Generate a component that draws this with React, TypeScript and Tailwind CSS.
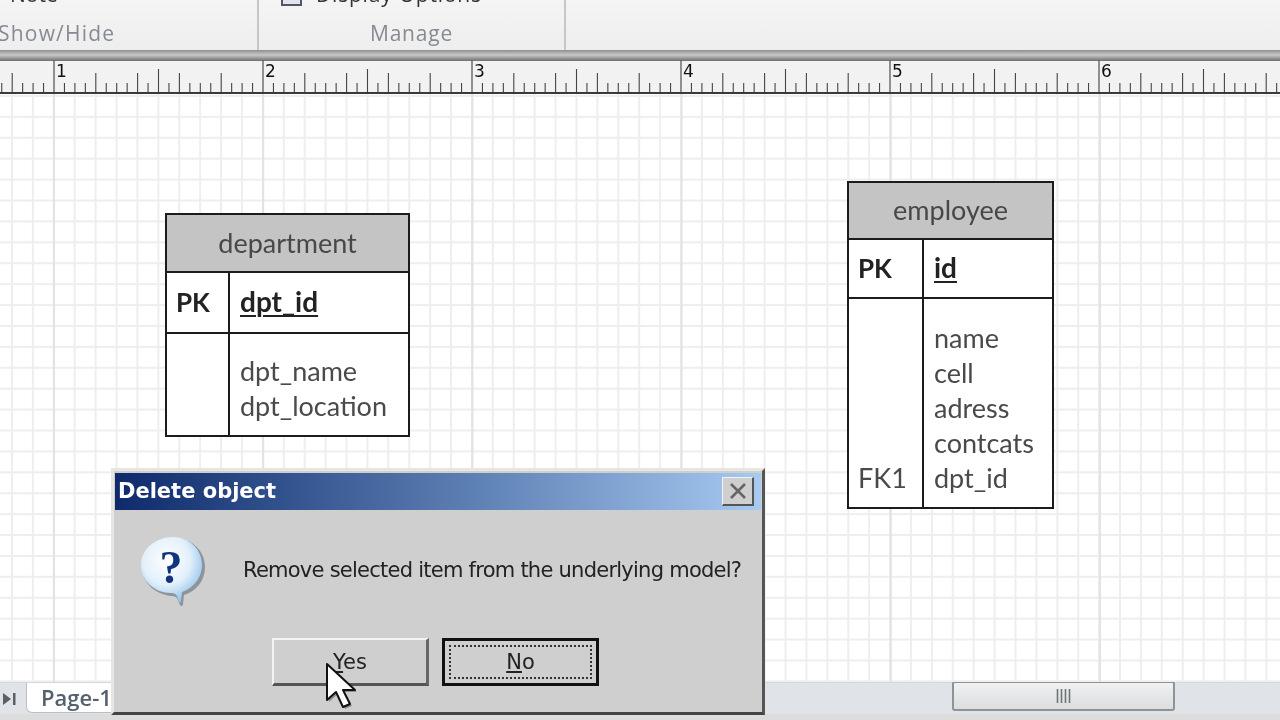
const MAJORS = [54, 263, 472, 681, 890, 1099];
const STEP = 10.45;

function tickTop(i: number) {
  const pos = ((i % 20) + 20) % 20;
  if (pos === 0) return 60;
  if (pos === 10) return 69;
  if (pos === 4 || pos === 8 || pos === 12 || pos === 16) return 73;
  return 83;
}

function Ruler() {
  const ticks = [];
  for (let i = -5; i < 118; i++) {
    const x = 54 + i * STEP;
    const top = tickTop(i);
    ticks.push(
      <line key={i} x1={x} x2={x} y1={top - 60} y2={32} stroke={top === 60 ? "#666" : "#444"} strokeWidth={top === 60 ? 1.4 : 1.1} />
    );
  }
  return (
    <div className="relative h-[34px] shrink-0 border-b-[2px] border-t border-[#3a3a3a] border-t-[#777] bg-[#f2f2f2]">
      <svg className="absolute left-0 top-[-1px]" width="1280" height="32">
        {ticks}
      </svg>
      {MAJORS.map((x, i) => (
        <span key={x} className="absolute top-[0px] text-[17px] leading-[20px] text-[#111] font-['DejaVu_Sans',sans-serif]" style={{ left: x + 2 }}>
          {i + 1}
        </span>
      ))}
    </div>
  );
}

function Ribbon() {
  return (
    <div className="flex h-[50px] shrink-0 bg-gradient-to-b from-[#f4f4f4] to-[#eeeeee] font-['Open_Sans',sans-serif] text-[21px] text-[#868b92]">
      <div className="relative w-[259px] shrink-0 border-r-2 border-[#c6c6c6]">
        <span className="absolute left-[-2px] bottom-[2px] leading-[30px] tracking-[1.2px]">Show/Hide</span>
        <span className="absolute left-[10px] top-[-21px] leading-[30px] text-[#333]">Note</span>
      </div>
      <div className="relative flex w-[307px] shrink-0 justify-center border-r-2 border-[#c6c6c6]">
        <span className="absolute left-[22px] top-[-12px] h-[18px] w-[21px] border-2 border-[#556] bg-[#dfe5ee]" />
        <span className="absolute left-[57px] top-[-21px] whitespace-nowrap leading-[30px] tracking-[0.8px] text-[#333]">Display Options</span>
        <span className="absolute bottom-[2px] leading-[30px] tracking-[0.8px]">Manage</span>
      </div>
      <div className="flex-1" />
    </div>
  );
}

function Band() {
  return <div className="h-[10px] shrink-0 bg-gradient-to-b from-[#8f8f8f] via-[#c9c9c9] to-[#7d7d7d]" />;
}

type TableProps = {
  name: string;
  keyField: string;
  rows: { key?: string; label: string }[];
  colWidth: string;
  pos: string;
  headerH: string;
  keyH: string;
};

function EntityTable({ name, keyField, rows, colWidth, pos, headerH, keyH }: TableProps) {
  return (
    <div className={`absolute flex flex-col border-2 border-[#1c1c1c] bg-white font-['Lato',sans-serif] text-[27px] text-[#4a4a4a] ${pos}`}>
      <div className={`flex shrink-0 items-center justify-center border-b-2 border-[#1c1c1c] bg-[#c4c4c4] text-[#484848] ${headerH}`}>{name}</div>
      <div className={`flex shrink-0 border-b-2 border-[#1c1c1c] text-[28px] font-bold text-[#222] ${keyH}`}>
        <div className={`flex shrink-0 items-center border-r-2 border-[#1c1c1c] pb-[1px] pl-[9px] text-[26px] ${colWidth}`}>PK</div>
        <div className="flex items-center pb-[3px] pl-[10px]">
          <span className="underline decoration-2 underline-offset-[3px]">{keyField}</span>
        </div>
      </div>
      <div className="flex flex-1">
        <div className={`flex shrink-0 flex-col justify-end border-r-2 border-[#1c1c1c] pb-[12px] pl-[9px] ${colWidth}`}>
          {rows.map((r) => (
            <div key={r.label} className="h-[35px] leading-[35px]">{r.key ?? ""}</div>
          ))}
        </div>
        <div className="flex flex-col justify-end pb-[12px] pl-[10px]">
          {rows.map((r) => (
            <div key={r.label} className="h-[35px] leading-[35px]">{r.label}</div>
          ))}
        </div>
      </div>
    </div>
  );
}

function QuestionIcon() {
  return (
    <svg width="74" height="76" viewBox="0 0 74 76">
      <defs>
        <radialGradient id="bubble" cx="0.42" cy="0.35" r="0.7">
          <stop offset="0" stopColor="#ffffff" />
          <stop offset="0.55" stopColor="#e2f0fb" />
          <stop offset="1" stopColor="#86bde8" />
        </radialGradient>
      </defs>
      <path d="M37 4C19 4 5 16 5 33c0 16 14 28 30 29 3 0 4 1 5 2l3 7c1 2 3 1 3-1l1-9c13-4 21-15 21-28C68 16 54 4 37 4z" fill="#8e949a" />
      <path d="M36 3C19 3 4 15 4 31c0 16 14 28 30 28 3 0 5 1 6 3l2 6c1 1 2 1 2-1l1-9c12-4 20-15 20-27C65 15 52 3 36 3z" fill="url(#bubble)" />
      <text x="34" y="49" textAnchor="middle" fontFamily="Liberation Serif, serif" fontWeight="700" fontSize="46" fill="#12347f">?</text>
    </svg>
  );
}

function Cursor() {
  return (
    <svg className="absolute left-[323px] top-[660px]" width="34" height="52" viewBox="0 0 34 52">
      <path d="M6 6v36l9-8 7 15 7-3-7-14h12z" fill="#000" opacity="0.3" />
      <path d="M4 4v36l9-8 7 15 7-3-7-14h12z" fill="#fff" stroke="#111" strokeWidth="2" strokeLinejoin="round" />
    </svg>
  );
}

function Dialog() {
  return (
    <div className="absolute left-[111px] top-[468px] flex h-[247px] w-[654px] flex-col border-[3px] border-t-[#e8e6e0] border-l-[#e8e6e0] border-r-[#555] border-b-[#444] bg-[#cfcfcf] px-[1px] pt-[2px] font-['DejaVu_Sans',sans-serif]">
      <div className="flex h-[37px] shrink-0 items-center justify-between bg-gradient-to-r from-[#0f2a6b] to-[#a6caf0] pl-[3px] pr-[7px]">
        <span className="text-[21px] font-bold tracking-[0px] text-white">Delete object</span>
        <div className="flex h-[29px] w-[32px] items-center justify-center border border-b-2 border-r-2 border-t-[#f2f2f2] border-l-[#f2f2f2] border-r-[#555] border-b-[#555] bg-[#cfcfcf]">
          <svg width="20" height="18" viewBox="0 0 20 18">
            <path d="M3 2l14 14M17 2L3 16" stroke="#666" strokeWidth="2.6" />
          </svg>
        </div>
      </div>
      <div className="flex flex-1 flex-col">
        <div className="flex items-start pl-[22px] pt-[24px]">
          <QuestionIcon />
          <span className="ml-[32px] mt-[22px] whitespace-nowrap text-[21px] leading-[28px] tracking-[-0.75px] text-[#222]">
            Remove selected item from the underlying model?
          </span>
        </div>
        <div className="mt-[28px] flex pl-[157px] text-[21px] text-[#222]">
          <div className="flex h-[48px] w-[157px] items-center justify-center border-2 border-b-[3px] border-r-[3px] border-t-[#f4f4f4] border-l-[#f4f4f4] border-r-[#666] border-b-[#555]">
            <span className="translate-y-[1px]"><span className="underline">Y</span>es</span>
          </div>
          <div className="ml-[13px] flex h-[48px] w-[157px] items-center justify-center border-[3px] border-[#111] p-[4px]">
            <div className="flex h-full w-full items-center justify-center border-2 border-dotted border-[#333]">
              <span className="translate-y-[1px]"><span className="underline">N</span>o</span>
            </div>
          </div>
        </div>
      </div>
    </div>
  );
}

function BottomBar() {
  return (
    <div className="flex h-[38px] shrink-0 flex-col border-t border-[#d5d9de] bg-[#e0e3e8]">
      <div className="flex h-[31px] items-start">
        <svg className="ml-[2px] mt-[8px]" width="16" height="16" viewBox="0 0 16 16">
          <path d="M1 2l8 6-8 6z" fill="#5b6066" />
          <rect x="11" y="2" width="2.5" height="12" fill="#5b6066" />
        </svg>
        <div className="ml-[8px] flex h-[30px] w-[150px] items-center rounded-b-[6px] border-x border-b border-[#b9bec4] bg-white pl-[14px] font-['Open_Sans',sans-serif] text-[22px] font-semibold text-[#55606c]">
          Page-1
        </div>
        <div className="-mt-[2px] ml-[776px] flex h-[30px] w-[223px] items-center justify-center rounded-[3px] border-2 border-[#8e9398] bg-gradient-to-b from-[#eff1f3] to-[#dddddd]">
          <svg width="16" height="14" viewBox="0 0 16 14">
            <path d="M1.5 0v14M5.5 0v14M9.5 0v14M13.5 0v14" stroke="#6e7378" strokeWidth="1.6" />
          </svg>
        </div>
      </div>
      <div className="flex-1 bg-[#dcdcdc]" />
    </div>
  );
}

export default function App() {
  return (
    <div className="relative flex h-[720px] w-[1280px] flex-col overflow-hidden bg-white blur-[0.5px]">
      <Ribbon />
      <Band />
      <Ruler />
      <div className="relative flex-1 bg-white bg-[linear-gradient(to_right,#e2e2e2_2px,transparent_2px),linear-gradient(to_right,#eeeeee_2px,transparent_2px),linear-gradient(to_bottom,#eeeeee_2px,transparent_2px)] bg-[size:209.2px_100%,20.92px_100%,100%_20.92px] bg-[position:53px_0,11px_0,0_1px]" />
      <BottomBar />
      <EntityTable
        name="department"
        keyField="dpt_id"
        rows={[{ label: "dpt_name" }, { label: "dpt_location" }]}
        colWidth="w-[63px]"
        pos="left-[165px] top-[213px] h-[224px] w-[245px]"
        headerH="h-[58px]"
        keyH="h-[61px]"
      />
      <EntityTable
        name="employee"
        keyField="id"
        rows={[{ label: "name" }, { label: "cell" }, { label: "adress" }, { label: "contcats" }, { key: "FK1", label: "dpt_id" }]}
        colWidth="w-[75px]"
        pos="left-[847px] top-[181px] h-[328px] w-[207px]"
        headerH="h-[57px]"
        keyH="h-[59px]"
      />
      <Dialog />
      <Cursor />
    </div>
  );
}
